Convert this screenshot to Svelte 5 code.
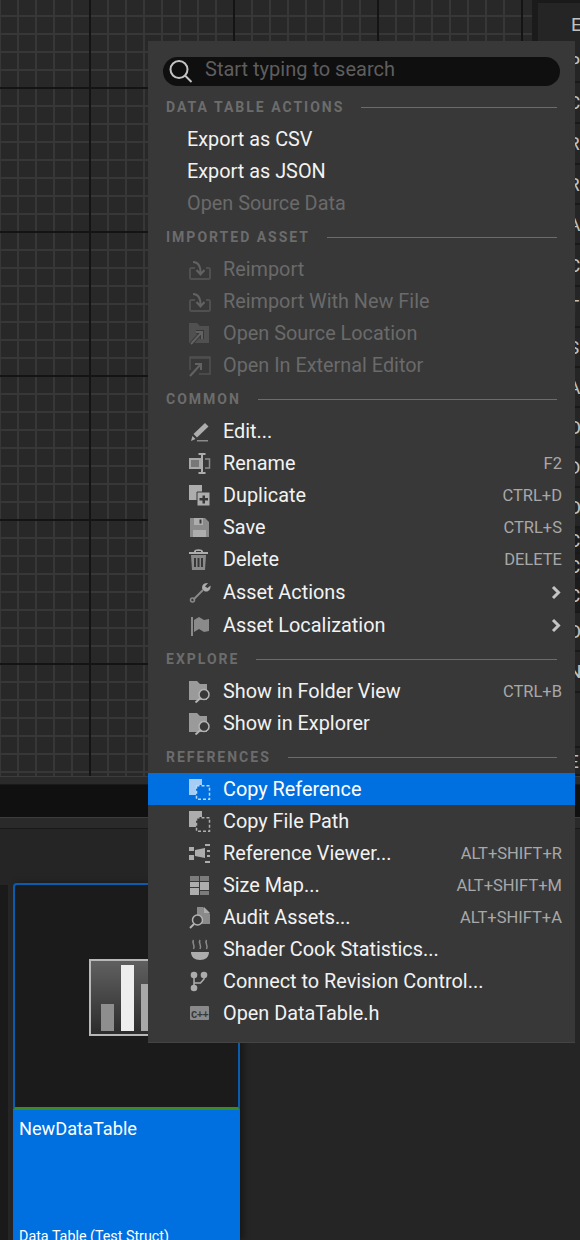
<script lang="ts">
	const sections = [
		{
			title: 'DATA TABLE ACTIONS',
			items: [
				{ label: 'Export as CSV', plain: true },
				{ label: 'Export as JSON', plain: true },
				{ label: 'Open Source Data', plain: true, off: true }
			]
		},
		{
			title: 'IMPORTED ASSET',
			items: [
				{ label: 'Reimport', icon: 'reimport', off: true },
				{ label: 'Reimport With New File', icon: 'reimport', off: true },
				{ label: 'Open Source Location', icon: 'folderOpen', off: true },
				{ label: 'Open In External Editor', icon: 'external', off: true }
			]
		},
		{
			title: 'COMMON',
			items: [
				{ label: 'Edit...', icon: 'edit' },
				{ label: 'Rename', icon: 'rename', key: 'F2' },
				{ label: 'Duplicate', icon: 'duplicate', key: 'CTRL+D' },
				{ label: 'Save', icon: 'save', key: 'CTRL+S' },
				{ label: 'Delete', icon: 'trash', key: 'DELETE' },
				{ label: 'Asset Actions', icon: 'wrench', sub: true },
				{ label: 'Asset Localization', icon: 'flag', sub: true }
			]
		},
		{
			title: 'EXPLORE',
			items: [
				{ label: 'Show in Folder View', icon: 'folderFind', key: 'CTRL+B' },
				{ label: 'Show in Explorer', icon: 'folderFind' }
			]
		},
		{
			title: 'REFERENCES',
			items: [
				{ label: 'Copy Reference', icon: 'copyRef', active: true },
				{ label: 'Copy File Path', icon: 'copyRef' },
				{ label: 'Reference Viewer...', icon: 'viewer', key: 'ALT+SHIFT+R' },
				{ label: 'Size Map...', icon: 'sizemap', key: 'ALT+SHIFT+M' },
				{ label: 'Audit Assets...', icon: 'audit', key: 'ALT+SHIFT+A' },
				{ label: 'Shader Cook Statistics...', icon: 'bowl' },
				{ label: 'Connect to Revision Control...', icon: 'branch' },
				{ label: 'Open DataTable.h', icon: 'cpp' }
			]
		}
	];

	// rows of the details panel behind the menu, only their first letters show
	const sideRows = [
		{ text: 'P', h: 40 },
		{ text: 'C', h: 41 },
		{ text: 'R', h: 41 },
		{ text: 'R', h: 40 },
		{ text: 'A', h: 40 },
		{ text: 'C', h: 42 },
		{ text: 'T', h: 41 },
		{ text: 'S', h: 40 },
		{ text: 'A', h: 40 },
		{ text: 'O', h: 40 },
		{ text: 'D', h: 40 },
		{ text: 'O', h: 40 },
		{ text: 'C', h: 26, dark: true },
		{ text: 'C', h: 26, dark: true },
		{ text: 'C', h: 33, dark: true },
		{ text: 'O', h: 39 },
		{ text: 'N', h: 41 },
		{ text: '', h: 55 },
		{ text: 'E', h: 28 }
	];
</script>

{#snippet icon(name: string)}
	<svg class="icon" width="24" height="24" viewBox="0 0 24 24">
		{#if name === 'reimport'}
			<path class="line" d="M7 11H3.5A1.5 1.5 0 0 0 2 12.500v8A1.5 1.5 0 0 0 3.500 22h17a1.500 1.500 0 0 0 1.500-1.500v-8a1.500 1.500 0 0 0-1.500-1.500H18" />
			<path class="line soft" d="M5 5c5 0 7.500 3 7.500 11M8.500 13l4 4.500 4-4.500" />
		{:else if name === 'folderOpen'}
			<path d="M1 2h8l3 3h9v17H1z" />
			<path class="line darkline wide" d="M3 23l11-12M8 11h6v7" />
			<path class="line soft" d="M3 23l11-12M8 11h6v7" />
		{:else if name === 'external'}
			<path class="line thin" d="M2 17V4h20v17H11" />
			<path class="line thin" d="M2 5h20" />
			<path class="line soft" d="M2 23l11-12M7 11h6v6" />
		{:else if name === 'edit'}
			<path class="bright" d="M17 4l3.500 3.500L9 18.500l-3.500-3.500z" />
			<path class="bright" d="M3 22l1.500-5 3 3z" />
			<path d="M9 21h11v1.500H9z" />
		{:else if name === 'rename'}
			<rect class="boxed" x="2" y="8" width="10" height="9" />
			<path class="line bright-stroke" d="M10.500 3h7M10.500 22h7M14 3v19" />
			<path class="line thin" d="M17 8h4.500v9H17" />
		{:else if name === 'duplicate'}
			<path class="bright" d="M1 2h13v7H9v8H1z" />
			<path class="bright gap" d="M9 9h13v14H9z" />
			<path class="dark" d="M14.500 12.500h2.500v2.500h3v2.500h-3v3h-2.500v-3h-3V15h3z" />
		{:else if name === 'save'}
			<path d="M2 3h15l4 4v15H2z" />
			<path class="bright" d="M6 3h9v7H6zM5 15h13v7H5z" />
			<path class="dark" d="M11.500 4.500h2v4h-2z" />
		{:else if name === 'trash'}
			<path class="bright" d="M1 5h19v2H1zM6 4.500C6 1.500 15 1.500 15 4.500V5h-2V4H8v1H6z" />
			<path d="M3 8h15l-1 15H4z" />
			<path class="dark" d="M6 11h2v9H6zM9.500 11h2v9h-2zM13 11h2v9h-2z" />
		{:else if name === 'wrench'}
			<path class="line" d="M5.500 19.500L15 10" />
			<circle class="line thin" cx="4.500" cy="20" r="2" />
			<path class="bright" d="M20 3c-4-.5-7 2.500-5.500 6.500l2.500 2c3.500.5 6-2 5.500-6l-3 2.500-2.500-1.500z" />
		{:else if name === 'flag'}
			<path class="line" d="M4 4v19" />
			<path d="M6 7l5-3 5 3 5-1v12l-5 1-5-3-5 3z" />
		{:else if name === 'folderFind'}
			<path class="folder" d="M1 2h8l3 3h7v16H1z" />
			<circle class="cutout" cx="16" cy="15.500" r="5" />
			<path class="line ring" d="M12.500 19l-5 4.500" />
		{:else if name === 'copyRef'}
			<path class="bright" d="M1 2h13v6H8v10H1z" />
			<path class="line thin dash" d="M8.500 8.750h13v13.500h-13z" />
		{:else if name === 'viewer'}
			<path class="bright" d="M1 6h5v4H1zM1 14h5v5H1zM7 9l10-2v10l-10-2z" />
			<path class="bright" d="M17 3h5v2h-5zM19 9h3v2h-3zM19 14h3v2h-3zM17 20h5v2h-5z" />
		{:else if name === 'sizemap'}
			<path class="mid" d="M2 3h9v5H2zM12 3h9v5h-9zM12 18h9v4h-9z" />
			<path class="bright" d="M2 9h9v5H2zM2 15h9v7H2zM12 9h9v8h-9z" />
		{:else if name === 'audit'}
			<path d="M9 2h6l7 7v10H9z" />
			<path class="bright" d="M16 2l6 6h-6z" />
			<circle class="cutout" cx="9.500" cy="15" r="5" />
			<path class="line ring" d="M6 19l-4 4" />
		{:else if name === 'bowl'}
			<path class="bright" d="M3 15h18c0 5-3.500 8-9 8s-9-3-9-8z" />
			<path class="line thin" d="M5.500 3c-2 3 2 5 0 9M12 3c-2 3 2 5 0 9M18.500 3c-2 3 2 5 0 9" />
		{:else if name === 'branch'}
			<circle class="bright" cx="6" cy="6" r="3.300" />
			<circle class="bright" cx="6" cy="19" r="3.300" />
			<circle class="bright" cx="16" cy="6" r="3.300" />
			<path class="line bright-stroke thin" d="M6 6v13M6 14h6.500l3.500-4V6" />
		{:else if name === 'cpp'}
			<rect x="2" y="5" width="19" height="14" rx="1" />
			<text class="cpp" x="3" y="16.500">C++</text>
		{/if}
	</svg>
{/snippet}

<div class="screen">
	<div class="canvas">
		<div class="side-panel">
			<div class="side-head">E</div>
			{#each sideRows as row}
				<div class="side-row" class:dark={row.dark} style="height: {row.h}px">{row.text}</div>
			{/each}
		</div>
	</div>
	<div class="bar-thin"></div>
	<div class="bar-black"></div>
	<div class="bar-thin low"></div>
	<div class="browser">
		<div class="card">
			<div class="thumb">
				<div class="table-icon">
					<span class="b1"></span>
					<span class="b2"></span>
					<span class="b3"></span>
				</div>
			</div>
			<div class="card-info">
				<div class="card-name">NewDataTable</div>
				<div class="card-type">Data Table (Test Struct)</div>
			</div>
		</div>
	</div>

	<div class="menu">
		<div class="search">
			<svg width="26" height="26" viewBox="0 0 26 26">
				<circle cx="11" cy="10.500" r="8.500" fill="none" stroke="#c4c4c4" stroke-width="2" />
				<path d="M17 16.500l6.500 6.500" stroke="#c4c4c4" stroke-width="2" fill="none" />
			</svg>
			<span>Start typing to search</span>
		</div>
		{#each sections as section}
			<div class="heading">
				<span>{section.title}</span>
				<i></i>
			</div>
			{#each section.items as item}
				<div class="item" class:off={item.off} class:active={item.active} class:tall={item.sub}>
					{#if item.icon}{@render icon(item.icon)}{/if}
					<span class="label">{item.label}</span>
					{#if item.key}<span class="key">{item.key}</span>{/if}
					{#if item.sub}
						<svg class="chev" width="11" height="15" viewBox="0 0 11 15">
							<path d="M2 2l5.500 5.500L2 13" fill="none" stroke="#c4c4c4" stroke-width="3" />
						</svg>
					{/if}
				</div>
			{/each}
		{/each}
	</div>
</div>

<style>
	:global(body) {
		margin: 0;
		background: #252525;
	}
	.screen {
		position: relative;
		width: 580px;
		height: 1240px;
		overflow: hidden;
		font-family: Roboto, sans-serif;
		color: #fff;
		background: #252525;
	}
	.canvas {
		height: 776px;
		overflow: hidden;
		display: flex;
		justify-content: flex-end;
		background-color: #282828;
		background-image:
			linear-gradient(90deg, #141414 2px, transparent 2px),
			linear-gradient(#141414 2px, transparent 2px),
			linear-gradient(90deg, #373737 2px, transparent 2px),
			linear-gradient(#373737 2px, transparent 2px);
		background-size: 144px 144px, 144px 144px, 18px 18px, 18px 18px;
		background-position: 89px 0, 0 87px, 17px 0, 0 15px;
	}
	.side-panel {
		width: 48px;
		box-sizing: border-box;
		background: #252525;
		border-left: 6px solid #1b1b1b;
		font-size: 19px;
		color: #c0c0c0;
	}
	.side-head {
		height: 43px;
		padding-left: 33px;
		line-height: 44px;
		box-sizing: border-box;
		border-top: 3px solid #1a1a1a;
	}
	.side-row {
		padding-left: 30px;
		display: flex;
		align-items: center;
		box-sizing: border-box;
		border-bottom: 2px solid #191919;
	}
	.side-row.dark {
		background: #1c1c1c;
	}
	.bar-thin {
		height: 9px;
		background: #2a2a2a;
		border-top: 1px solid #3c3c3c;
		border-bottom: 1px solid #1a1a1a;
		box-sizing: border-box;
	}
	.bar-thin.low {
		height: 12px;
	}
	.bar-black {
		height: 32px;
		background: #101010;
	}
	.browser {
		padding: 54px 0 0 13px;
		background: linear-gradient(#1a1a1a, #1a1a1a) no-repeat 0 56px / 8px 100%;
	}
	.card {
		width: 227px;
		box-shadow: 4px 0 6px rgba(0, 0, 0, 0.35);
	}
	.thumb {
		height: 227px;
		display: flex;
		justify-content: center;
		padding: 74px 0 0 0;
		box-sizing: border-box;
		background: #1b1b1b;
		border: 2px solid #0a5cb0;
		border-bottom: 3px solid #3d8a20;
		border-radius: 4px 4px 0 0;
	}
	.table-icon {
		width: 75px;
		height: 77px;
		display: flex;
		align-items: flex-end;
		gap: 7px;
		padding: 0 0 3px 10px;
		box-sizing: border-box;
		border: 2px solid #b8b8b8;
		background: linear-gradient(#606060, #2c2c2c);
	}
	.table-icon span {
		width: 13px;
		display: block;
	}
	.b1 { height: 27px; background: #8e8e8e; }
	.b2 { height: 66px; background: #eee; }
	.b3 { height: 47px; background: #a8a8a8; }
	.card-info {
		height: 130px;
		background: #0070e0;
		padding: 8px 6px;
		box-sizing: border-box;
	}
	.card-name {
		font-size: 18.2px;
		line-height: 22px;
	}
	.card-type {
		margin-top: 86px;
		font-size: 14.3px;
		line-height: 20px;
	}
	.menu {
		position: absolute;
		left: 148px;
		top: 41px;
		width: 427px;
		height: 1002px;
		box-sizing: border-box;
		padding-top: 16px;
		background: #383838;
		border-bottom: 1px solid #444;
	}
	.search {
		display: flex;
		align-items: center;
		gap: 8px;
		height: 29px;
		margin: 0 15px 5px 15px;
		padding-left: 5px;
		border-radius: 15px;
		background: #0f0f0f;
		font-size: 20px;
		line-height: 25px;
		color: #5e5e5e;
	}
	.search svg {
		margin-top: 1px;
	}
	.search span {
		margin: -5px 0 0 3px;
	}
	.heading {
		display: flex;
		align-items: center;
		gap: 17px;
		height: 32px;
		margin-top: 2px;
		padding: 0 18px;
		font-size: 14px;
		font-weight: 700;
		letter-spacing: 2px;
		color: #6c6c6c;
	}
	.search + .heading {
		margin-top: 0;
	}
	.heading i {
		flex: 1;
		height: 1px;
		background: #6c6c6c;
	}
	.item {
		display: flex;
		align-items: center;
		box-sizing: border-box;
		height: 32px;
		padding: 0 13px 0 39px;
		font-size: 19.85px;
		color: #f2f2f2;
	}
	.item.tall {
		height: 33px;
		padding-top: 1px;
	}
	.item.off {
		color: #6a6a6a;
	}
	.item.active {
		background: #0070e0;
		color: #fff;
	}
	.icon {
		flex: none;
		margin: 0 11px 0 1px;
		fill: #8a8a8a;
	}
	.off .icon {
		fill: #505050;
	}
	.active .icon {
		fill: #a8cdf5;
	}
	.icon .bright {
		fill: #adadad;
	}
	.icon .folder {
		fill: #9a9a9a;
	}
	.icon .gap {
		stroke: #383838;
		stroke-width: 1;
	}
	.icon .mid {
		fill: #7c7c7c;
	}
	.active .icon .bright {
		fill: #a8cdf5;
	}
	.icon .dark {
		fill: #383838;
	}
	.icon .boxed {
		fill: #777;
		stroke: #a8a8a8;
		stroke-width: 2;
	}
	.icon .cutout {
		fill: #383838;
		stroke: #b4b4b4;
		stroke-width: 1.5;
	}
	.icon .line {
		fill: none;
		stroke: #8a8a8a;
		stroke-width: 2;
	}
	.icon .line.ring {
		stroke: #b4b4b4;
	}
	.off .icon .line {
		stroke: #505050;
	}
	.off .icon .line.soft {
		stroke: #626262;
	}
	.active .icon .line {
		stroke: #bcd8f8;
	}
	.icon .line.thin {
		stroke-width: 1.5;
	}
	.icon .line.bright-stroke {
		stroke: #adadad;
	}
	.icon .line.dash {
		stroke: #adadad;
		stroke-dasharray: 3 2;
	}
	.active .icon .line.dash {
		stroke: #bcd8f8;
	}
	.off .icon .line.darkline {
		stroke: #383838;
	}
	.icon .line.wide {
		stroke-width: 4;
	}
	.icon .cpp {
		font-family: "Liberation Mono", monospace;
		font-size: 10.5px;
		font-weight: 700;
		letter-spacing: -0.6px;
		fill: #383838;
	}
	.label {
		flex: 1;
	}
	.key {
		font-size: 16.5px;
		color: #a8a8a8;
	}
	.chev {
		margin-right: 0;
	}
</style>
